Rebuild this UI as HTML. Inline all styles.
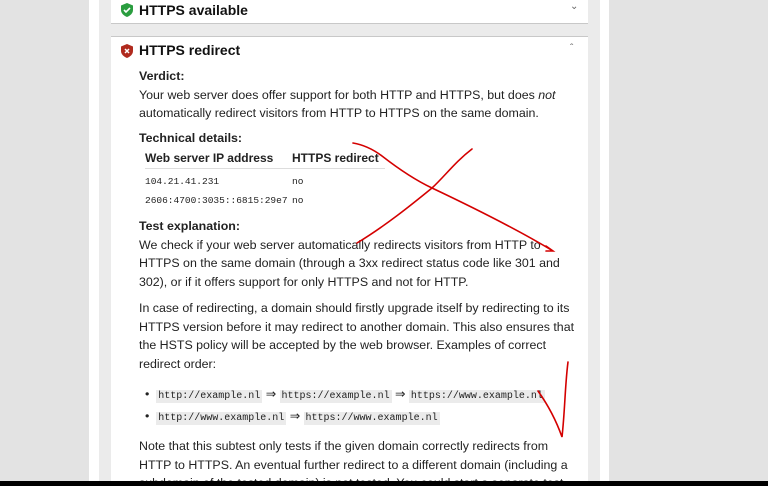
<!DOCTYPE html>
<html><head><meta charset="utf-8"><style>
html,body{margin:0;width:768px;height:486px;overflow:hidden}
body{background:#e3e3e3;font-family:"Liberation Sans",sans-serif;position:relative;color:#222}
.wstrip{position:absolute;left:89px;width:520px;top:0;height:486px;background:#fff}
.inner{position:absolute;left:99px;width:501px;top:0;height:486px;background:#ebebeb}
.panel{position:absolute;left:111px;width:477px;background:#fff;overflow:hidden}
.h{position:absolute;left:28px;font-weight:bold;font-size:14px;color:#111}
.t{position:absolute;left:28px;font-size:12.4px;line-height:18.5px;white-space:nowrap}
b{font-weight:bold}
.mono{font-family:"Liberation Mono",monospace;font-size:9.5px}
code{font-family:"Liberation Mono",monospace;font-size:10px;background:#ebebeb;padding:1px 2px}
.black{position:absolute;left:0;top:481px;width:768px;height:5px;background:#000}
</style></head><body>
<div class="wstrip"></div><div class="inner"></div>
<div class="panel" style="top:0;height:23px;border-bottom:1px solid #c8c8c8">
 <svg style="position:absolute;left:10px;top:3px" width="12" height="14" viewBox="0 0 12 14"><path d="M6 0L12 2.5V7C12 10.5 9 12.8 6 14C3 12.8 0 10.5 0 7V2.5Z" fill="#2a9d3f"/><path d="M3 7l2 2 4-4" stroke="#fff" stroke-width="1.6" fill="none"/></svg>
 <div class="h" style="top:2px">HTTPS available</div>
 <div style="position:absolute;left:459px;top:1px;font-size:10px;color:#666">&#8964;</div>
</div>
<div class="panel" style="top:36px;height:450px;border-top:1px solid #c8c8c8">
 <svg style="position:absolute;left:10px;top:7px" width="12" height="14" viewBox="0 0 12 14"><path d="M6 0L12 2.5V7C12 10.5 9 12.8 6 14C3 12.8 0 10.5 0 7V2.5Z" fill="#b02a1e"/><path d="M4 5l4 4M8 5l-4 4" stroke="#fff" stroke-width="1.5"/></svg>
 <div class="h" style="top:5px">HTTPS redirect</div>
 <div style="position:absolute;left:459px;top:6px;font-size:10px;color:#666">&#710;</div>
 <div class="t" style="top:30px"><b>Verdict:</b><br>Your web server does offer support for both HTTP and HTTPS, but does <i>not</i><br>automatically redirect visitors from HTTP to HTTPS on the same domain.</div>
 <div class="t" style="top:92px"><b>Technical details:</b></div>
 <div style="position:absolute;left:34px;top:114px;font-weight:bold;font-size:12px">Web server IP address</div>
 <div style="position:absolute;left:181px;top:114px;font-weight:bold;font-size:12px">HTTPS redirect</div>
 <div style="position:absolute;left:34px;top:131px;width:240px;border-top:1px solid #ddd"></div>
 <div class="mono" style="position:absolute;left:34px;top:139px">104.21.41.231</div>
 <div class="mono" style="position:absolute;left:181px;top:139px">no</div>
 <div class="mono" style="position:absolute;left:34px;top:158px">2606:4700:3035::6815:29e7</div>
 <div class="mono" style="position:absolute;left:181px;top:158px">no</div>
 <div class="t" style="top:180px"><b>Test explanation:</b><br>We check if your web server automatically redirects visitors from HTTP to<br>HTTPS on the same domain (through a 3xx redirect status code like 301 and<br>302), or if it offers support for only HTTPS and not for HTTP.</div>
 <div class="t" style="top:262px">In case of redirecting, a domain should firstly upgrade itself by redirecting to its<br>HTTPS version before it may redirect to another domain. This also ensures that<br>the HSTS policy will be accepted by the web browser. Examples of correct<br>redirect order:</div>
 <div class="t" style="top:348px;left:34px">&#8226;&nbsp; <code>http://example.nl</code> &#8658; <code>https://example.nl</code> &#8658; <code>https://www.example.nl</code></div>
 <div class="t" style="top:370px;left:34px">&#8226;&nbsp; <code>http://www.example.nl</code> &#8658; <code>https://www.example.nl</code></div>
 <div class="t" style="top:400px">Note that this subtest only tests if the given domain correctly redirects from<br>HTTP to HTTPS. An eventual further redirect to a different domain (including a<br>subdomain of the tested domain) is not tested. You could start a separate test</div>
</div>
<svg style="position:absolute;left:0;top:0" width="768" height="486"><g fill="none" stroke="#d40000" stroke-width="1.6" stroke-linecap="round">
<path d="M353 143C365 145 374 150 382 156C400 170 415 180 432 188C470 206 515 228 553 251M546 246L553 251L546 251"/>
<path d="M472 149C455 162 445 176 432 188C410 206 385 226 357 243"/>
<path d="M538 391C548 405 556 420 562 437C565 410 565 385 568 362"/>
</g></svg>
<div class="black"></div>
</body></html>
